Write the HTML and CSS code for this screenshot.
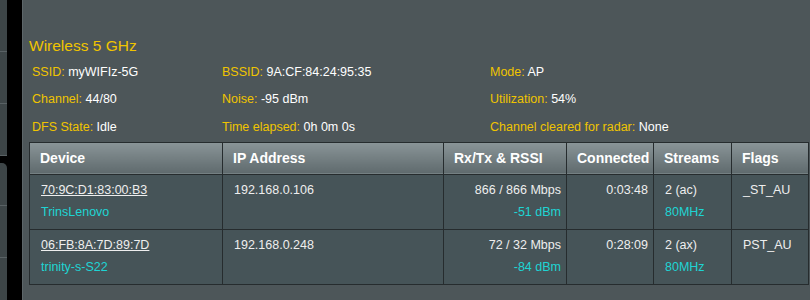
FILE: index.html
```html
<!DOCTYPE html>
<html lang="en">
<head>
    <meta charset="UTF-8">
    <title>Wireless Log</title>
    <link rel="stylesheet" href="styles.css">
</head>
<body>
    <div class="side-menu">
        <div class="menu-group">
            <div class="menu-item"></div>
            <div class="menu-item"></div>
            <div class="menu-item"></div>
        </div>
        <div class="menu-group second">
            <div class="menu-item short"></div>
            <div class="menu-item"></div>
            <div class="menu-item"></div>
        </div>
    </div>
    <div class="main-panel">
        <h2 class="band-title">Wireless 5 GHz</h2>
        <div class="band-info">
            <div><span class="label">SSID:</span> myWIFIz-5G</div>
            <div><span class="label">BSSID:</span> 9A:CF:84:24:95:35</div>
            <div><span class="label">Mode:</span> AP</div>
            <div><span class="label">Channel:</span> 44/80</div>
            <div><span class="label">Noise:</span> -95 dBm</div>
            <div><span class="label">Utilization:</span> 54%</div>
            <div><span class="label">DFS State:</span> Idle</div>
            <div><span class="label">Time elapsed:</span> 0h 0m 0s</div>
            <div><span class="label">Channel cleared for radar:</span> None</div>
        </div>
        <table class="client-table">
            <thead>
                <tr>
                    <th class="col-device">Device</th>
                    <th class="col-ip">IP Address</th>
                    <th class="col-rate">Rx/Tx &amp; RSSI</th>
                    <th class="col-time">Connected</th>
                    <th class="col-streams">Streams</th>
                    <th class="col-flags">Flags</th>
                </tr>
            </thead>
            <tbody>
                <tr>
                    <td><a class="mac">70:9C:D1:83:00:B3</a><br><span class="hint">TrinsLenovo</span></td>
                    <td>192.168.0.106</td>
                    <td class="num">866 / 866 Mbps<br><span class="hint">-51 dBm</span></td>
                    <td class="num">0:03:48</td>
                    <td>2 (ac)<br><span class="hint">80MHz</span></td>
                    <td>_ST_AU</td>
                </tr>
                <tr>
                    <td><a class="mac">06:FB:8A:7D:89:7D</a><br><span class="hint">trinity-s-S22</span></td>
                    <td>192.168.0.248</td>
                    <td class="num">72 / 32 Mbps<br><span class="hint">-84 dBm</span></td>
                    <td class="num">0:28:09</td>
                    <td>2 (ax)<br><span class="hint">80MHz</span></td>
                    <td>PST_AU</td>
                </tr>
            </tbody>
        </table>
    </div>
</body>
</html>
```

FILE: styles.css
```css
body {
    margin: 0;
    padding: 0;
    background-color: #000000;
    font-family: "Liberation Sans", Arial, sans-serif;
    display: flex;
    height: 300px;
    overflow: hidden;
}
.side-menu {
    width: 7px;
    margin-right: 15px;
    display: flex;
    flex-direction: column;
    gap: 7px;
}
.menu-group {
    background-color: #3d4547;
}
.menu-group.second {
    border-top-right-radius: 5px;
    flex: 1;
}
.menu-item {
    height: 51px;
    border-bottom: 1px solid #596164;
}
.menu-item.short {
    height: 42px;
}
.main-panel {
    flex: 1;
    background-color: #4d5659;
    border-left: 1px solid #5d6669;
    padding: 36px 0 0 6px;
}
.band-title {
    margin: 0 0 2px 0;
    font-size: 15.5px;
    font-weight: normal;
    line-height: 20px;
    color: #f0c400;
}
.band-info {
    display: grid;
    grid-template-columns: 190px 268px auto;
    grid-auto-rows: 27.5px;
    align-items: center;
    padding-left: 3px;
    font-size: 12.5px;
    color: #ffffff;
}
.label {
    color: #f0c400;
}
.client-table {
    margin-top: 1px;
    border-collapse: collapse;
    table-layout: fixed;
    width: 779px;
    font-size: 12.5px;
    color: #eeeeee;
}
.client-table th,
.client-table td {
    box-sizing: border-box;
    border: 1px solid #262c2e;
}
.client-table th {
    height: 32px;
    padding: 0 10px;
    text-align: left;
    font-size: 14px;
    color: #ffffff;
    background: linear-gradient(#8a9598, #5f6a6d);
}
.client-table td {
    height: 55px;
    padding: 4px 5px 5px 11px;
    vertical-align: top;
    line-height: 22px;
    background-color: #465458;
}
.col-device { width: 193px; }
.col-ip { width: 221px; }
.col-rate { width: 123px; }
.col-time { width: 87px; }
.col-streams { width: 78px; }
.col-flags { width: 77px; }
.client-table td.num {
    text-align: right;
}
.mac {
    color: #eeeeee;
    text-decoration: underline;
}
.hint {
    color: #1ed4d4;
}
```
